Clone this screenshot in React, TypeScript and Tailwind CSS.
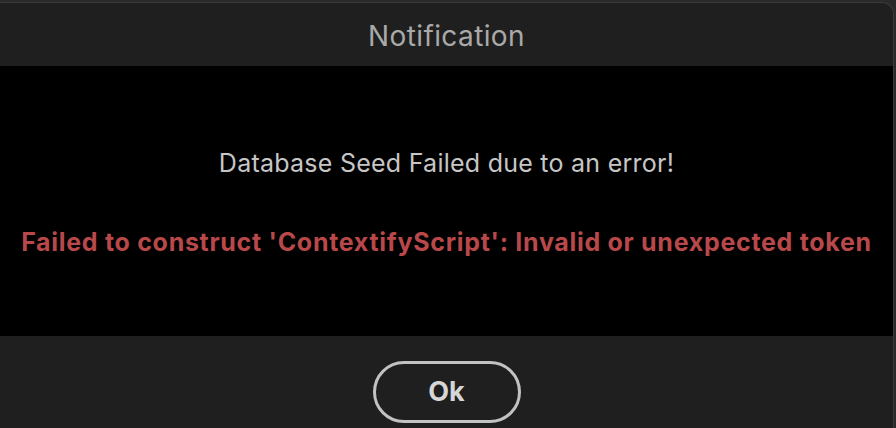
import React from "react";

export default function App() {
  return (
    <div
      className="w-[896px] h-[428px] overflow-hidden bg-[#2a2a2a] pt-[2px]"
      style={{ fontFamily: "Inter, 'Noto Sans', sans-serif" }}
    >
      <div className="w-[894px] h-[426px] flex flex-col bg-[#1f1f1f] border-t border-r border-[#3a3a3a] rounded-tr-[12px] overflow-hidden">
        <div className="h-[63px] flex items-center justify-center">
          <span className="text-[28px] leading-none tracking-[0.4px] text-[#a9a9a9] pt-[2px]">Notification</span>
        </div>
        <div className="h-[270px] bg-black flex flex-col items-center">
          <div className="mt-[82px] text-[25px] leading-[30px] tracking-[0.25px] text-[#c6c6c6] whitespace-nowrap">
            Database Seed Failed due to an error!
          </div>
          <div className="mt-[49px] text-[25px] leading-[30px] tracking-[0.7px] font-bold text-[#b8484a] whitespace-nowrap">
            Failed to construct 'ContextifyScript': Invalid or unexpected token
          </div>
        </div>
        <div className="flex-1 flex justify-center pt-[25px]">
          <button className="w-[148px] h-[62px] rounded-full border-[3px] border-[#c2c2c2] flex items-center justify-center text-[27px] font-bold text-[#d6d6d6]">
            Ok
          </button>
        </div>
      </div>
    </div>
  );
}
